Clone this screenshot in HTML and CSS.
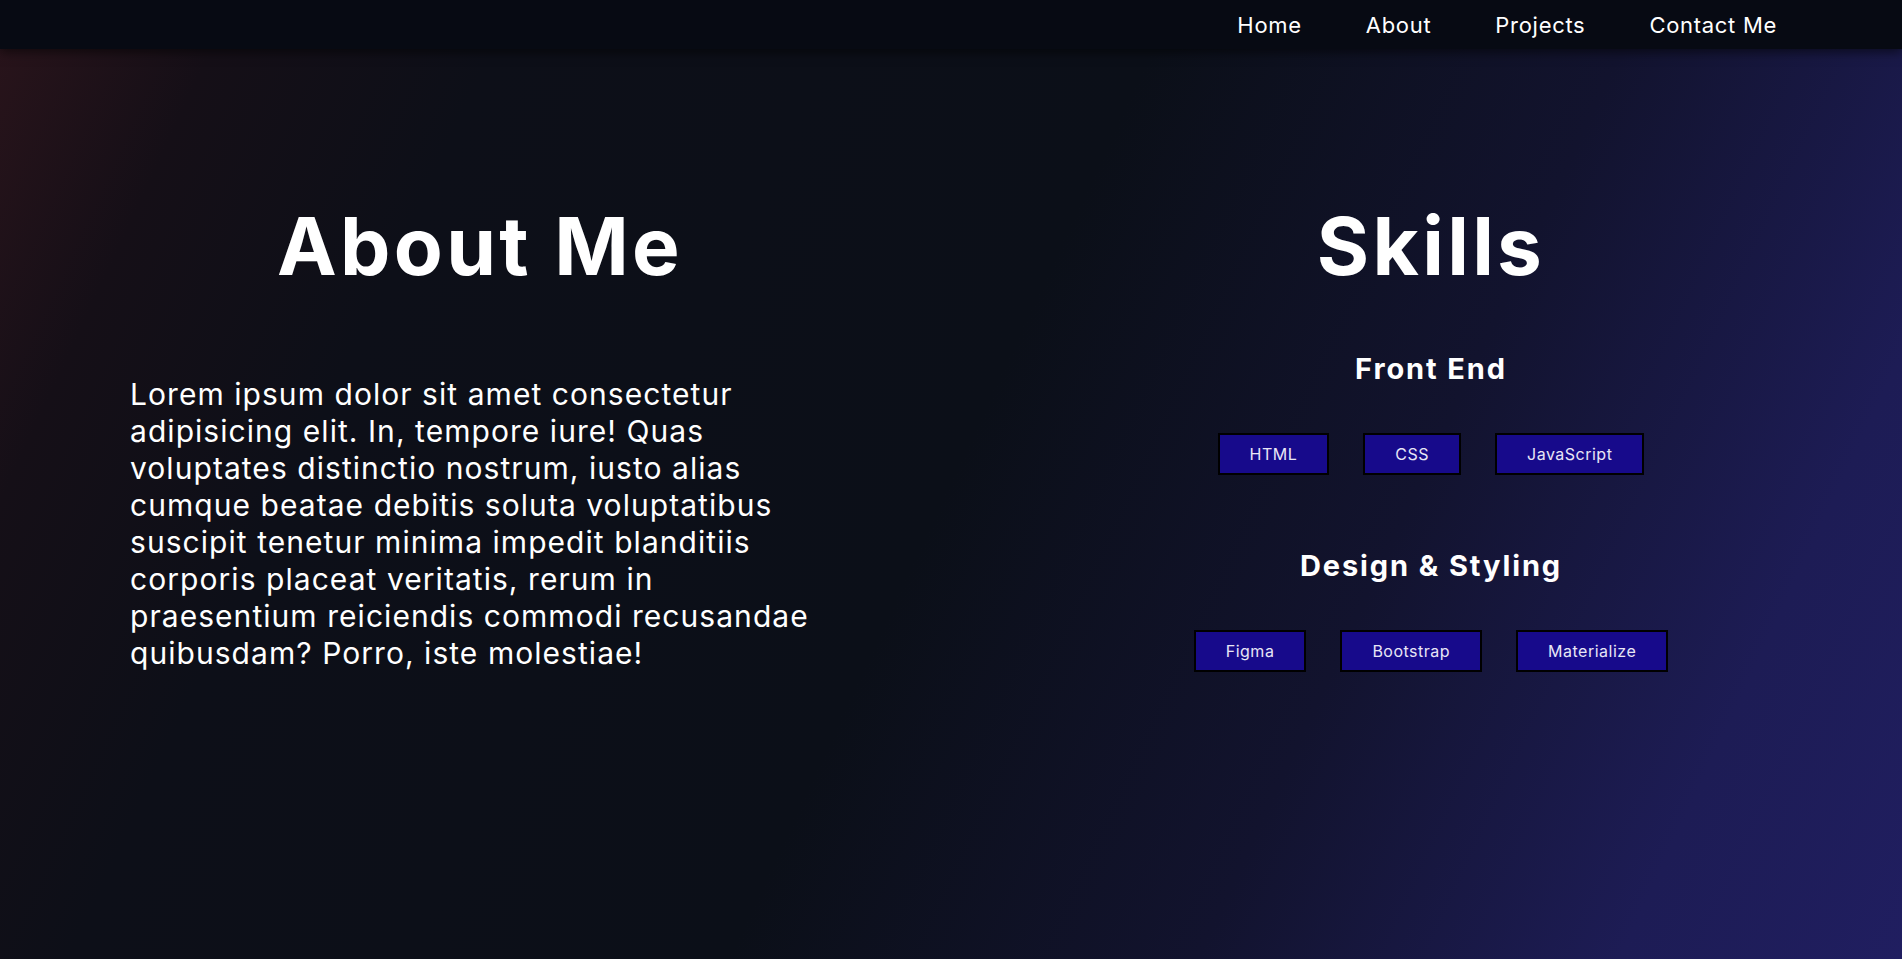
FILE: index.html
```html
<!DOCTYPE html>
<html lang="en">
<head>
<meta charset="utf-8">
<title>About Me</title>
<link rel="stylesheet" href="styles.css">
</head>
<body>
<nav class="topnav">
  <a class="nav-link" href="#">Home</a>
  <a class="nav-link" href="#">About</a>
  <a class="nav-link" href="#">Projects</a>
  <a class="nav-link" href="#">Contact Me</a>
</nav>
<main class="about">
  <section class="col col-about">
    <h1 class="title">About Me</h1>
    <p class="bio">Lorem ipsum dolor sit amet consectetur adipisicing elit. In, tempore iure! Quas voluptates distinctio nostrum, iusto alias cumque beatae debitis soluta voluptatibus suscipit tenetur minima impedit blanditiis corporis placeat veritatis, rerum in praesentium reiciendis commodi recusandae quibusdam? Porro, iste molestiae!</p>
  </section>
  <section class="col col-skills">
    <h1 class="title">Skills</h1>
    <div class="group">
      <h3 class="group-title">Front End</h3>
      <div class="tags">
        <span class="tag">HTML</span>
        <span class="tag">CSS</span>
        <span class="tag">JavaScript</span>
      </div>
    </div>
    <div class="group group-2">
      <h3 class="group-title">Design &amp; Styling</h3>
      <div class="tags">
        <span class="tag">Figma</span>
        <span class="tag">Bootstrap</span>
        <span class="tag">Materialize</span>
      </div>
    </div>
  </section>
</main>
</body>
</html>
```

FILE: styles.css
```css
* { box-sizing: border-box; }

html, body {
  margin: 0;
  padding: 0;
}

body {
  min-height: 100vh;
  font-family: "Inter", "Open Sans", "DejaVu Sans", sans-serif;
  color: #ffffff;
  background:
    linear-gradient(115deg, #2a141b 0%, #150f17 10%, #0d0f18 22%, #0b0f18 50%, #12132e 70%, #1d1c55 88%, #201e60 100%);
  background-attachment: fixed;
}

.topnav {
  height: 49px;
  display: flex;
  justify-content: flex-end;
  align-items: center;
  gap: 64px;
  padding-right: 125px;
  background: #070a13;
  box-shadow: 0 3px 10px rgba(0, 0, 0, 0.55);
  position: relative;
  z-index: 2;
}

.nav-link {
  color: #ffffff;
  text-decoration: none;
  font-size: 22px;
  line-height: 26px;
  letter-spacing: 0.7px;
}

.about {
  display: grid;
  grid-template-columns: 1fr 1fr;
}

.col {
  display: flex;
  flex-direction: column;
  align-items: center;
  padding-left: 9px;
}

.title {
  margin: 149px 0 0;
  font-size: 80px;
  line-height: 96px;
  font-weight: 700;
  letter-spacing: 3.3px;
  text-align: center;
}

.bio {
  align-self: stretch;
  margin: 82px 0 0;
  padding: 0 125px 0 121px;
  font-size: 30px;
  line-height: 37px;
  letter-spacing: 1.05px;
}

.group {
  display: flex;
  flex-direction: column;
  align-items: center;
  margin-top: 57px;
}

.group-2 {
  margin-top: 73px;
}

.group-title {
  margin: 0;
  font-size: 29px;
  line-height: 36px;
  font-weight: 700;
  letter-spacing: 1.9px;
}

.tags {
  display: flex;
  gap: 34px;
  margin-top: 46px;
}

.tag {
  display: block;
  padding: 9px 30px;
  border: 2px solid #000000;
  background: #170a8b;
  color: #e8e6f6;
  font-size: 16px;
  line-height: 20px;
  letter-spacing: 0.5px;
}
```
